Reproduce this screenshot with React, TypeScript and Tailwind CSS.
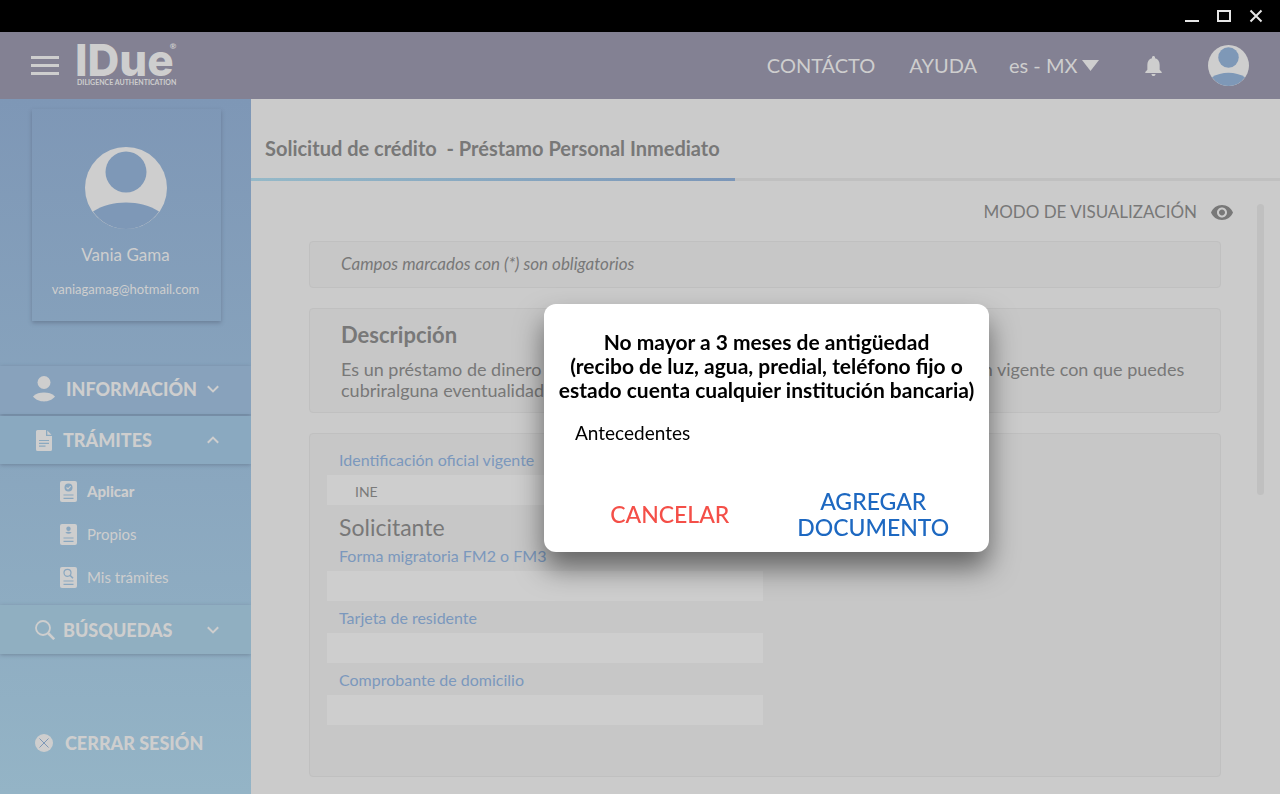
import type { ReactNode } from 'react'

interface Field {
  id: string
  label: string
  value?: string
}

const MIGRATION_FIELDS: Field[] = [
  { id: 'forma', label: 'Forma migratoria FM2 o FM3' },
  { id: 'tarjeta', label: 'Tarjeta de residente' },
  { id: 'comprobante', label: 'Comprobante de domicilio' },
]

function Avatar({ className }: { className: string }) {
  return (
    <svg viewBox="0 0 82 82" className={className} aria-hidden="true">
      <circle cx="41" cy="41" r="41" fill="#cecece" />
      <circle cx="41" cy="25" r="20.5" fill="#7e98b7" />
      <path d="M8 64.500C17 58.500 29 55.500 41 55.500S65 58.500 74 64.500A40 40 0 0 1 8 64.500Z" fill="#7e98b7" />
    </svg>
  )
}

function Chevron({ up = false }: { up?: boolean }) {
  return (
    <svg viewBox="0 0 12 8" className="ml-auto h-2 w-3" fill="none" stroke="currentColor" strokeWidth="2">
      <path d={up ? 'M.8 6.800 6 1.600l5.200 5.200' : 'M.8 1.200 6 6.400l5.200-5.200'} />
    </svg>
  )
}

/** Small page with two text lines; children go in the upper half */
function DocIcon({ children }: { children: ReactNode }) {
  return (
    <svg viewBox="0 0 17 21" className="h-[21px] w-[17px] shrink-0" fill="none" stroke="#89a7c0">
      <rect width="17" height="21" rx="2" fill="#cecece" stroke="none" />
      {children}
      <path d="M3.500 14h10M3.500 17.300h10" strokeWidth="1.200" />
    </svg>
  )
}

function MenuButton({ icon, label, open, className }: { icon: ReactNode; label: string; open?: boolean; className: string }) {
  return (
    <button
      type="button"
      aria-expanded={!!open}
      className={`flex w-full items-center pr-8 text-left text-lg font-black shadow-[0_1px_4px_rgba(60,70,90,0.35)] ${className}`}
    >
      {icon}
      {label}
      <Chevron up={open} />
    </button>
  )
}

function FormField({ id, label, value = '' }: Field) {
  return (
    <div className="flex flex-col">
      <label htmlFor={id} className="flex h-8 items-center pt-0.5 pl-3 text-base text-[#7b98bd]">
        {label}
      </label>
      <input
        id={id}
        type="text"
        defaultValue={value}
        className="h-[30px] w-full bg-[#cecece] pt-0.5 pl-7 text-sm text-[#7a7a7a] outline-none"
      />
    </div>
  )
}

function TitleBar() {
  return (
    <div className="flex h-8 items-center justify-end gap-4 bg-black pr-4 text-[#e6e6e6]">
      <button type="button" aria-label="Minimizar" className="h-4 w-4">
        <svg viewBox="0 0 16 16" className="h-4 w-4" fill="none" stroke="currentColor" strokeWidth="2">
          <path d="M1 13h14" />
        </svg>
      </button>
      <button type="button" aria-label="Maximizar" className="h-4 w-4">
        <svg viewBox="0 0 16 16" className="h-4 w-4" fill="none" stroke="currentColor" strokeWidth="2">
          <path d="M2 3h12v10H2z" />
        </svg>
      </button>
      <button type="button" aria-label="Cerrar" className="h-4 w-4">
        <svg viewBox="0 0 16 16" className="h-4 w-4" fill="none" stroke="currentColor" strokeWidth="2">
          <path d="m2.500 2.500 11 11m0-11-11 11" />
        </svg>
      </button>
    </div>
  )
}

function Header() {
  return (
    <header className="flex h-[67px] items-center bg-[#838193] pr-[31px] pl-[31px] text-[#cecece]">
      <button type="button" aria-label="Menú" className="flex w-7 flex-col gap-[5px]">
        <span className="h-[3px] bg-[#cecece]" />
        <span className="h-[3px] bg-[#cecece]" />
        <span className="h-[3px] bg-[#cecece]" />
      </button>
      <a href="#" className="relative ml-4 flex flex-col pb-1">
        <span className="font-['Inter',sans-serif] text-[44px] leading-9 font-extrabold">IDue</span>
        <span className="absolute -top-0.5 right-0 text-[8px] leading-3 font-bold">®</span>
        <span className="pl-0.5 text-[7px] leading-2 font-bold">DILIGENCE AUTHENTICATION</span>
      </a>
      <nav className="ml-auto flex items-center gap-8 pb-0.5 text-xl">
        <a href="#">CONTÁCTO</a>
        <a href="#" className="pl-0.5">
          AYUDA
        </a>
        <div className="flex items-center">
          <select aria-label="Idioma" className="appearance-none bg-transparent pr-1 outline-none">
            <option>es - MX</option>
          </select>
          <svg viewBox="0 0 17 11" className="mt-0.5 h-[11px] w-[17px]" fill="currentColor">
            <path d="M0 0h17L8.500 11z" />
          </svg>
        </div>
      </nav>
      <button type="button" aria-label="Notificaciones" className="ml-[46px]">
        <svg viewBox="4 2.500 16 19.500" className="h-5 w-[17px]" fill="currentColor">
          <path d="M12 22c1.100 0 2-.9 2-2h-4c0 1.100.89 2 2 2zm6-6v-5c0-3.070-1.640-5.640-4.500-6.320V4c0-.83-.67-1.500-1.500-1.500s-1.500.67-1.500 1.500v.68C7.630 5.360 6 7.920 6 11v5l-2 2v1h16v-1l-2-2z" />
        </svg>
      </button>
      <button type="button" aria-label="Mi cuenta" className="ml-[46px]">
        <Avatar className="h-[41px] w-[41px]" />
      </button>
    </header>
  )
}

function Sidebar() {
  return (
    <aside className="flex w-[251px] shrink-0 flex-col bg-linear-to-b from-[#7e97b6] to-[#94b4c6] text-[#cecece]">
      <div className="mt-2.5 mr-[30px] ml-8 flex h-[212px] flex-col items-center pt-[38px] pr-0.5 shadow-[0_2px_4px_rgba(60,70,90,0.35)]">
        <Avatar className="h-[82px] w-[82px]" />
        <p className="mt-3.5 text-[17px] leading-6">Vania Gama</p>
        <p className="mt-3 text-[13px] leading-5">vaniagamag@hotmail.com</p>
      </div>

      <nav className="mt-[45px] flex flex-col">
        <MenuButton
          label="INFORMACIÓN"
          className="h-12 bg-[#88a2bc] pb-0.5 pl-[33px]"
          icon={
            <svg viewBox="0 0 22 26" className="mr-[11px] h-[26px] w-[22px]" fill="currentColor">
              <circle cx="11" cy="6.500" r="6.500" />
              <path d="M0 20.500C3 17.300 7 16.400 11 16.400s8 .9 11 4.100c-3 3.700-7 4.900-11 4.900S3 24.200 0 20.500Z" />
            </svg>
          }
        />
        <MenuButton
          open
          label="TRÁMITES"
          className="mt-0.5 h-12 bg-[#8aa9c0] pl-9"
          icon={
            <svg viewBox="0 0 16 21" className="mr-[11px] h-[21px] w-4" fill="currentColor">
              <path d="M1.500 0H10v6h6v13.500a1.500 1.500 0 0 1-1.500 1.500h-13A1.500 1.500 0 0 1 0 19.500v-18A1.500 1.500 0 0 1 1.500 0Z" />
              <path d="M11.300.5v4.300h4.200z" />
              <path d="M3 10.500h10M3 13.300h10M3 16.100h6.500" stroke="#8aa9c0" strokeWidth="1.200" />
            </svg>
          }
        />
        <ul className="flex flex-col gap-[21px] pt-4 pb-[17px] pl-[60px] text-[15px]">
          <li>
            <a href="#" className="flex h-[22px] items-center gap-2.5 font-black">
              <DocIcon>
                <circle cx="8.500" cy="6.500" r="4" fill="#89a7c0" stroke="none" />
                <path d="m6.500 6.500 1.500 1.500 2.700-2.800" stroke="#cecece" strokeWidth="1.200" />
              </DocIcon>
              Aplicar
            </a>
          </li>
          <li>
            <a href="#" className="flex h-[22px] items-center gap-2.5">
              <DocIcon>
                <circle cx="8.500" cy="4.700" r="2.200" fill="#89a7c0" stroke="none" />
                <path d="M5.300 8.500c2-.9 4.400-.9 6.400 0-2 1.700-4.400 1.700-6.400 0Z" fill="#89a7c0" stroke="none" />
              </DocIcon>
              Propios
            </a>
          </li>
          <li>
            <a href="#" className="flex h-[22px] items-center gap-2.5">
              <DocIcon>
                <circle cx="7.500" cy="5.800" r="3.500" strokeWidth="1.200" />
                <path d="m10 8.300 3 3" strokeWidth="1.600" />
              </DocIcon>
              Mis trámites
            </a>
          </li>
        </ul>
        <MenuButton
          label="BÚSQUEDAS"
          className="h-[49px] bg-[#90afc1] pl-[35px]"
          icon={
            <svg viewBox="0 0 20 20" className="mr-2 h-5 w-5" fill="none" stroke="currentColor">
              <circle cx="8" cy="8" r="7" strokeWidth="1.800" />
              <path d="m13 13 6.200 6.200" strokeWidth="2.600" />
            </svg>
          }
        />
      </nav>

      <button type="button" className="mt-[77px] flex h-6 items-center gap-3 pl-[35px] text-lg font-black">
        <svg viewBox="0 0 18 18" className="h-[18px] w-[18px]">
          <circle cx="9" cy="9" r="9" fill="#cecece" />
          <path d="m4.500 4.500 9 9m0-9-9 9" stroke="#7e98b7" />
        </svg>
        CERRAR SESIÓN
      </button>
    </aside>
  )
}

function Content() {
  return (
    <main className="flex min-w-0 flex-1 flex-col bg-[#cbcbcb] text-[#787878]">
      <h1 className="flex h-[79px] items-center pt-[19px] pl-3.5 text-xl font-bold whitespace-pre">
        {'Solicitud de crédito  - Préstamo Personal Inmediato'}
      </h1>
      <div className="h-[3px] bg-[#c0c0c0]">
        <div className="h-full w-[47%] bg-linear-to-r from-[#95b9c8] to-[#7b96b8]" />
      </div>

      <div className="flex flex-1 items-start pt-[22px] pr-4 pb-4 pl-[58px]">
        <div className="flex min-w-0 flex-1 flex-col">
          <button type="button" className="mr-6 flex h-[18px] items-center gap-3.5 self-end text-[17px]">
            MODO DE VISUALIZACIÓN
            <svg viewBox="1 4.500 22 15" className="h-[15px] w-[22px]" fill="#787878">
              <path d="M12 4.500C7 4.500 2.730 7.610 1 12c1.730 4.390 6 7.500 11 7.500s9.270-3.110 11-7.500c-1.730-4.390-6-7.500-11-7.500zM12 17c-2.760 0-5-2.240-5-5s2.240-5 5-5 5 2.240 5 5-2.240 5-5 5zm0-8c-1.660 0-3 1.340-3 3s1.340 3 3 3 3-1.340 3-3-1.340-3-3-3z" />
            </svg>
          </button>

          <div className="mt-5 mr-9 flex flex-col gap-5">
            <p className="flex h-[47px] items-center rounded border border-[#c0c0c0] bg-[#c7c7c7] pb-0.5 pl-[31px] text-[17px] italic">
              Campos marcados con (*) son obligatorios
            </p>

            <section className="h-[105px] rounded border border-[#c0c0c0] bg-[#c7c7c7] pt-3 pl-[31px]">
              <h2 className="text-[22px] leading-7 font-bold">Descripción</h2>
              <p className="mt-2.5 text-lg leading-[21px] whitespace-nowrap">
                Es un préstamo de dinero que se otorga a empleados que cuentan con una relación vigente con que puedes
                <br />
                cubriralguna eventualidad
              </p>
            </section>

            <section className="h-[344px] rounded border border-[#c0c0c0] bg-[#c7c7c7] pt-[9px] pl-[17px]">
              <div className="w-[436px] max-w-full">
                <FormField id="identificacion" label="Identificación oficial vigente" value="INE" />
                <h2 className="mt-2.5 pl-3 text-[23px] leading-6">Solicitante</h2>
                {MIGRATION_FIELDS.map((f) => (
                  <FormField key={f.id} {...f} />
                ))}
              </div>
            </section>
          </div>
        </div>
        <div className="mt-px h-[291px] w-[7px] rounded-full bg-[#c0c0c0]" />
      </div>
    </main>
  )
}

function DocumentDialog() {
  return (
    <div className="fixed inset-0 flex items-start justify-center pt-[304px] pl-[253px]">
      <div
        role="dialog"
        aria-modal="true"
        aria-labelledby="dialog-title"
        className="flex h-[248px] w-[445px] flex-col rounded-xl bg-white pt-[26px] text-black shadow-[0_16px_28px_rgba(0,0,0,0.5)]"
      >
        <h2 id="dialog-title" className="text-center text-[21px] leading-6 font-bold">
          No mayor a 3 meses de antigüedad
          <br />
          (recibo de luz, agua, predial, teléfono fijo o
          <br />
          estado cuenta cualquier institución bancaria)
        </h2>
        <p className="mt-[19px] pl-[31px] text-[19px] leading-6">Antecedentes</p>
        <div className="mt-auto grid grid-cols-2 items-center pr-3.5 pb-3 pl-6 text-[23px] leading-[26px] font-medium">
          <button type="button" className="text-[#f44f48]">
            CANCELAR
          </button>
          <button type="button" className="text-[#1d68c1]">
            AGREGAR
            <br />
            DOCUMENTO
          </button>
        </div>
      </div>
    </div>
  )
}

export default function App() {
  return (
    <div className="flex min-h-screen flex-col font-['Lato',sans-serif]">
      <TitleBar />
      <Header />
      <div className="flex flex-1">
        <Sidebar />
        <Content />
      </div>
      <DocumentDialog />
    </div>
  )
}
